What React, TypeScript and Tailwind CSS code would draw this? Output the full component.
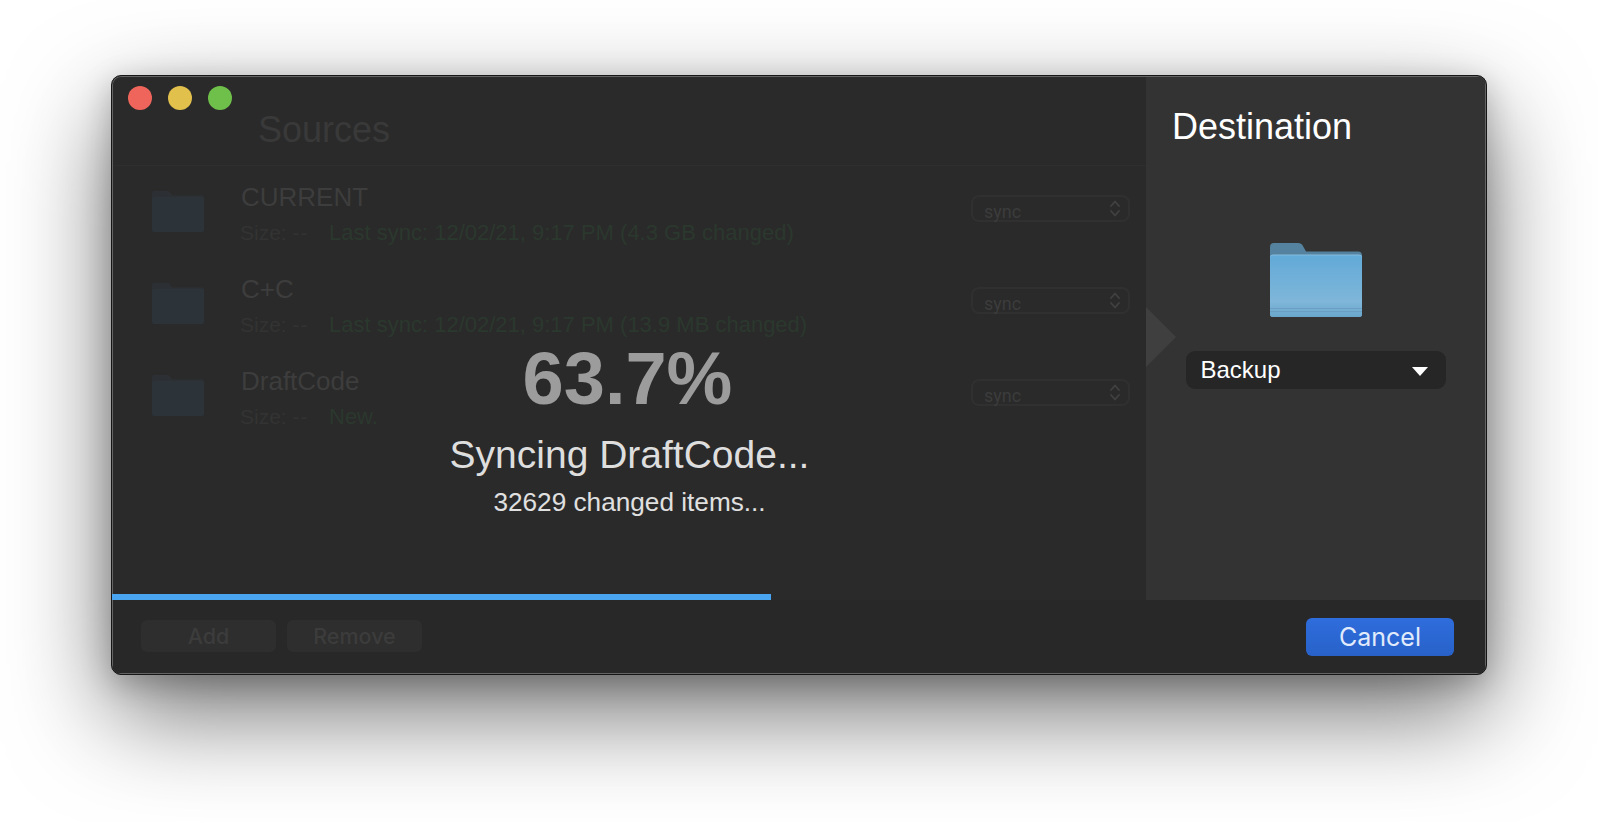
const SANS = "font-['Liberation_Sans',Arial,sans-serif]";

function Folder({ blue }: { blue?: boolean }) {
  if (blue) {
    return (
      <svg width="92" height="74" viewBox="0 0 92 74" className="block">
        <defs>
          <linearGradient id="blueFront" x1="0" y1="0" x2="0" y2="1">
            <stop offset="0" stopColor="#62aad8" />
            <stop offset="0.75" stopColor="#7fb6d9" />
            <stop offset="1" stopColor="#6aa6cc" />
          </linearGradient>
        </defs>
        <path d="M0 4a4 4 0 0 1 4-4h24c3 0 4 1 5.500 4l2.500 4.500h52a4 4 0 0 1 4 4V20H0z" fill="#55839f" />
        <rect x="0" y="11.500" width="92" height="62.500" rx="3" fill="#86bde0" />
        <rect x="0" y="12.500" width="92" height="61.500" rx="3" fill="url(#blueFront)" />
        <rect x="0" y="65" width="92" height="1" fill="#6a9fc2" />
        <rect x="0" y="68" width="92" height="1" fill="#6a9fc2" />
      </svg>
    );
  }
  return (
    <svg width="52" height="41" viewBox="0 0 52 41" className="block">
      <path d="M0 2a2 2 0 0 1 2-2h13c2 0 2.500 .5 3.500 2l1.500 2.500h30a2 2 0 0 1 2 2V12H0z" fill="#2c3034" />
      <rect x="0" y="6" width="52" height="35" rx="2" fill="#2c3439" />
    </svg>
  );
}

function SyncSelect() {
  return (
    <div className="w-[159px] h-[27px] rounded-lg border-2 border-[#303030] flex items-center justify-between pl-[11px] pr-[7px]">
      <span className="font-['Roboto',sans-serif] text-[18px] leading-none text-[#3c3c3c] pt-[7px]">sync</span>
      <svg width="12" height="19" viewBox="0 0 12 19" fill="none" stroke="#414141" strokeWidth="1.800" strokeLinecap="round" strokeLinejoin="round">
        <path d="M2 7l4-4.500L10 7" />
        <path d="M2 12l4 4.500L10 12" />
      </svg>
    </div>
  );
}

function SourceRow({ name, green }: { name: string; green: string }) {
  return (
    <div className="h-[92px] flex items-start pl-[39px] pr-[16px]">
      <div className="mt-[25px]">
        <Folder />
      </div>
      <div className={`ml-[36px] flex-1 ${SANS}`}>
        <div className="text-[26px] leading-[30px] text-[#3d3d3d] mt-[16px] pl-[1px]">{name}</div>
        <div className="leading-[24px] mt-[9px] flex">
          <span className="text-[21px] text-[#333333] w-[89px]">Size: <span className="tracking-[1px]">--</span></span>
          <span className="text-[22px] text-[#2b382e]">{green}</span>
        </div>
      </div>
      <div className="mt-[29px]">
        <SyncSelect />
      </div>
    </div>
  );
}

export default function App() {
  return (
    <div className="w-[1598px] h-[822px] bg-white overflow-hidden pl-[111px] pt-[75px]">
      <div className="relative w-[1376px] h-[600px] rounded-[10px] bg-[#2a2a2a] overflow-hidden border border-[#161616] shadow-[inset_0_0_0_1px_#646464,0_38px_100px_rgba(0,0,0,0.56),0_8px_30px_rgba(0,0,0,0.22)] flex flex-col">
        <div className="h-[523px] flex m-[1px] mb-0">
          <div className="w-[1033px] flex flex-col relative">
            <div className="h-[89px] border-b border-[#2e2e2e] flex items-start pl-[15px] pt-[9px]">
              <div className="flex gap-[16px]">
                <div className="w-[24px] h-[24px] rounded-full bg-[#f0655b]" />
                <div className="w-[24px] h-[24px] rounded-full bg-[#e2c04c]" />
                <div className="w-[24px] h-[24px] rounded-full bg-[#6fc04a]" />
              </div>
              <div className={`${SANS} text-[36px] leading-[42px] text-[#393939] mt-[23px] ml-[26px]`}>Sources</div>
            </div>
            <SourceRow name="CURRENT" green="Last sync: 12/02/21, 9:17 PM (4.3 GB changed)" />
            <SourceRow name="C+C" green="Last sync: 12/02/21, 9:17 PM (13.9 MB changed)" />
            <SourceRow name="DraftCode" green="New." />
            <div className={`absolute inset-x-0 top-[259px] flex flex-col items-center ${SANS}`}>
              <div className="text-[74px] leading-[85px] font-bold text-[#9c9c9c] mr-[4px]">63.7%</div>
              <div className="text-[39px] leading-[44px] text-[#dedede] mt-[12px]">Syncing DraftCode...</div>
              <div className="text-[26.2px] leading-[30px] text-[#e0e0e0] mt-[10px]">32629 changed items...</div>
            </div>
            <div className="absolute left-[-1px] bottom-0 h-[6px] w-[659px] bg-[#4aa5f0]" />
          </div>
          <div className={`relative flex-1 bg-[#333333] flex flex-col items-center ${SANS}`}>
            <div className="absolute left-0 top-[230px] w-0 h-0 border-y-[30px] border-y-transparent border-l-[30px] border-l-[#3f3f3f]" />
            <div className="self-start ml-[26px] mt-[29px] text-[36px] leading-[42px] text-white">Destination</div>
            <div className="mt-[95px]">
              <Folder blue />
            </div>
            <div className="mt-[34px] w-[260px] h-[38px] rounded-[9px] bg-[#262626] flex items-center justify-between pl-[15px] pr-[18px]">
              <span className="text-[24px] leading-none text-white">Backup</span>
              <div className="w-0 h-0 border-x-[8px] border-x-transparent border-t-[9px] border-t-white mt-[3px]" />
            </div>
          </div>
        </div>
        <div className="flex-1 bg-[#282828] mx-[1px] mb-[1px] flex items-center justify-between pl-[28px] pr-[31px]">
          <div className="flex gap-[11px] mb-[1px]">
            <div className="w-[135px] h-[32px] rounded-[6px] bg-[#2e2e2e] flex items-center justify-center font-['Inter',sans-serif] font-medium text-[21.5px] text-[#3c3c3c]">Add</div>
            <div className="w-[135px] h-[32px] rounded-[6px] bg-[#2e2e2e] flex items-center justify-center font-['Inter',sans-serif] font-medium text-[21.5px] text-[#3c3c3c]">Remove</div>
          </div>
          <div className="w-[148px] h-[38px] rounded-[6px] bg-gradient-to-b from-[#2f6ddd] to-[#2862c9] flex items-center justify-center font-['Inter',sans-serif] text-[25px] text-[#e1ebfb] pt-[2px]">Cancel</div>
        </div>
      </div>
    </div>
  );
}
